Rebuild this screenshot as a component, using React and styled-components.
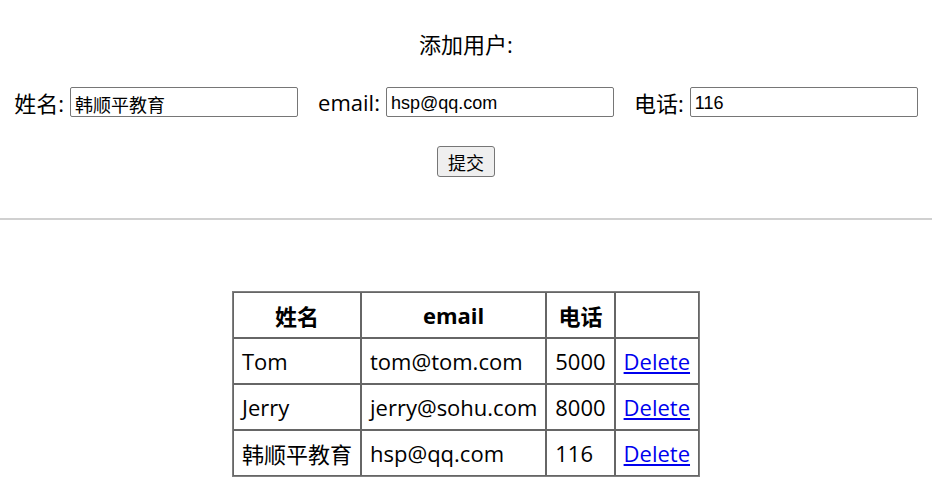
import React, { useState } from 'react'
import styled, { createGlobalStyle } from 'styled-components'

const GlobalStyle = createGlobalStyle`
    body {
        margin: 0;
        background: #ffffff;
        font-family: "Open Sans", "Noto Sans CJK SC", sans-serif;
        color: #000;
    }
`

const Page = styled.div`
    display: flex;
    flex-direction: column;
    align-items: center;
    padding-top: 27px;
`

const Title = styled.div`
    font-size: 22px;
    line-height: 34px;
`

const FormRow = styled.div`
    display: flex;
    align-items: center;
    margin-top: 25px;
`

const Field = styled.label`
    display: flex;
    align-items: center;
    font-size: 22px;
    margin-left: ${props => (props.$first ? '0' : '20px')};
`

const Input = styled.input`
    width: 228px;
    height: 30px;
    box-sizing: border-box;
    margin-left: 6px;
    padding: 3px 4px 0 4px;
    border: 1px solid #767676;
    border-radius: 2px;
    font-family: "Liberation Sans", "Noto Sans CJK SC", sans-serif;
    font-size: 18px;
`

const Submit = styled.button`
    margin-top: 28px;
    width: 58px;
    height: 31px;
    font-family: "Noto Sans CJK SC", sans-serif;
    font-size: 18px;
    background: #efefef;
    border: 1px solid #767676;
    border-radius: 3px;
    padding: 0;
`

const Rule = styled.hr`
    align-self: stretch;
    margin: 41px 0 0 0;
    border: none;
    border-top: 2px solid #d0d0d0;
`

const Table = styled.table`
    margin-top: 71px;
    border: 1px solid #808080;
    border-spacing: 0;
    font-size: 22px;
`

const Th = styled.th`
    border: 1px solid #666;
    height: 44px;
    padding: 0 8px;
    font-weight: 700;
`

const Td = styled.td`
    border: 1px solid #666;
    height: 44px;
    padding: 0 8px;
`

const DeleteLink = styled.a`
    color: #0000ee;
    text-decoration: underline;
    cursor: pointer;
`

export default function App() {
    const [users, setUsers] = useState([
        { name: 'Tom', email: 'tom@tom.com', tel: '5000' },
        { name: 'Jerry', email: 'jerry@sohu.com', tel: '8000' },
        { name: '韩顺平教育', email: 'hsp@qq.com', tel: '116' },
    ])

    return (
        <Page>
            <GlobalStyle />
            <Title>添加用户:</Title>
            <FormRow>
                <Field $first>姓名:<Input defaultValue="韩顺平教育" /></Field>
                <Field>email:<Input defaultValue="hsp@qq.com" /></Field>
                <Field>电话:<Input defaultValue="116" /></Field>
            </FormRow>
            <Submit>提交</Submit>
            <Rule />
            <Table>
                <thead>
                    <tr>
                        <Th>姓名</Th>
                        <Th>email</Th>
                        <Th>电话</Th>
                        <Th></Th>
                    </tr>
                </thead>
                <tbody>
                    {users.map((u, i) => (
                        <tr key={i}>
                            <Td>{u.name}</Td>
                            <Td>{u.email}</Td>
                            <Td>{u.tel}</Td>
                            <Td>
                                <DeleteLink onClick={() => setUsers(users.filter((_, j) => j !== i))}>Delete</DeleteLink>
                            </Td>
                        </tr>
                    ))}
                </tbody>
            </Table>
        </Page>
    )
}
